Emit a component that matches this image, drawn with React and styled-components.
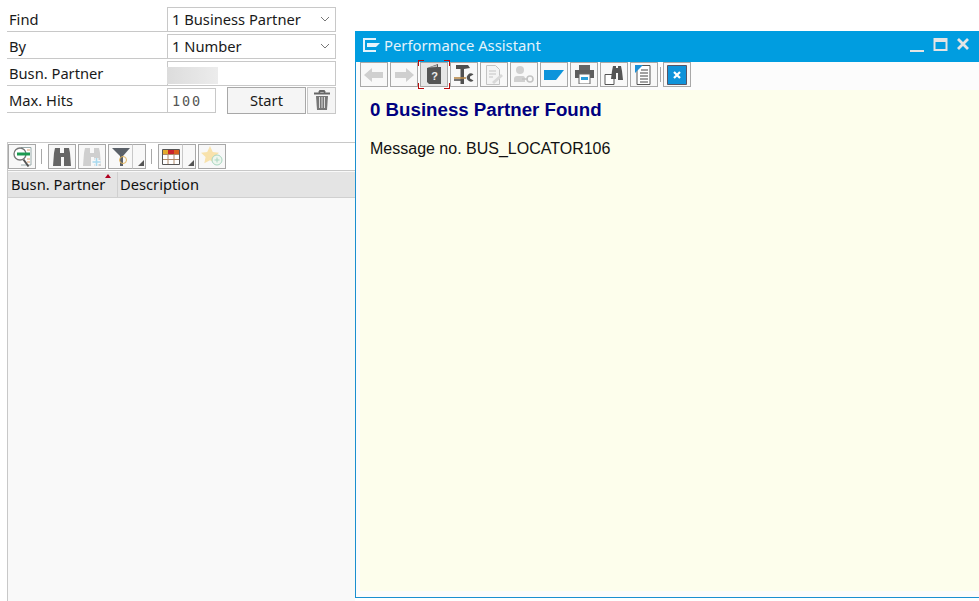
import React from "react";
import styled, { createGlobalStyle } from "styled-components";

const Global = createGlobalStyle`
  html, body { margin: 0; padding: 0; background: #fff; }
  * { box-sizing: border-box; }
`;
const Page = styled.div`
  position: relative; width: 979px; height: 601px; overflow: hidden; background: #fff;
  font-family: "Noto Sans", "Liberation Sans", sans-serif; color: #1a1a1a;
`;
const Left = styled.div`
  width: 348px; height: 601px; margin-left: 7px; padding-top: 7px; display: flex; flex-direction: column;
`;
const Form = styled.div`display: flex; flex-direction: column; gap: 2px; width: 329px;`;
const Row = styled.div`display: flex; height: 25px;`;
const Label = styled.div`
  width: 160px; padding: 2px 0 0 2px; font-size: 14.7px; line-height: 20px; border-bottom: 1px solid #c8c8c8;
`;
const Field = styled.div`
  width: ${p => p.$w || 169}px; border: 1px solid #c8c8c8; display: flex; align-items: center;
  justify-content: space-between; padding: 0 5px 2px 4px; font-size: 14.7px; background: #fff; overflow: visible;
`;
const MaxField = styled(Field)`padding-bottom: 0;`;
const Num = styled.span`
  font-family: "DejaVu Sans Mono", monospace; font-size: 13.5px; letter-spacing: 1.9px; color: #555;
`;
const Redacted = styled.div`
  width: 51px; height: 17px; margin: 6px 0 0 -5px;
  background: linear-gradient(90deg, #dcdcdc, #ececec);
`;
const StartBtn = styled.div`
  width: 79px; height: 27px; margin: -1px 0 0 11px; padding-bottom: 1px; border: 1px solid #a8a8a8; background: #f5f5f5;
  display: flex; align-items: center; justify-content: center; font-size: 14.7px;
`;
const TrashBtn = styled.div`
  width: 29px; height: 27px; margin: -1px 0 0 1px; border: 1px solid #c8c8c8; background: #f5f5f5;
  display: flex; align-items: center; justify-content: center;
`;
const Grid = styled.div`
  margin-top: 29px; flex: 1; display: flex; flex-direction: column; border-left: 1px solid #c8c8c8; background: #f9f9f9;
`;
const Tools = styled.div`
  height: 29px; padding: 1px 0 0 0; display: flex; align-items: flex-start; background: #fff;
  border-top: 1px solid #c8c8c8; border-bottom: 1px solid #c8c8c8;
`;
const Btn = styled.div`
  width: ${p => p.$w || 28}px; height: 25px; margin-left: ${p => p.$ml ?? 2}px; flex: none; position: relative;
  border: 1px solid #a8a8a8; background: ${p => p.$on ? "#e6e6e6" : "#f8f8f8"};
  display: flex; align-items: center; justify-content: center;
`;
const Caret = styled.div`
  width: 14px; height: 25px; flex: none; border: 1px solid #a8a8a8; border-left: 1px solid #c8c8c8; background: #f8f8f8; position: relative;
  margin-left: -1px;
  &::after { content: ""; position: absolute; right: 1px; bottom: 2px; border-style: solid; border-width: 0 0 6px 6px; border-color: transparent transparent #555 transparent; }
`;
const Sep = styled.div`width: 1px; height: 15px; margin: 5px ${p => p.$r ?? 6}px 0 ${p => p.$l ?? 5}px; background: #a8a8a8; flex: none;`;
const Head = styled.div`
  margin-top: 1px; height: 26px; background: #e4e4e4; border-bottom: 1px solid #d0d0d0; display: flex; font-size: 14.7px; color: #111;
`;
const HeadCell = styled.div`
  width: ${p => p.$w}px; padding: 2px 0 0 ${p => p.$pl ?? 3}px; line-height: 21px; position: relative; border-right: ${p => p.$line ? "1px solid #d0d0d0" : "0"}; white-space: nowrap;
`;
const Sort = styled.span`
  position: absolute; left: 97px; top: 2px; border-style: solid; border-width: 0 3px 4px 3px; border-color: transparent transparent #b00020 transparent;
`;
const Win = styled.div`
  position: absolute; left: 355px; top: 31px; width: 624px; height: 567px; background: #fcfcfc; display: flex; flex-direction: column;
  border-left: 1px solid #1b8fd0; border-bottom: 1px solid #1b8fd0;
`;
const Title = styled.div`
  height: 31px; flex: none; background: #009de0; color: #e4f3fb; display: flex; align-items: center; padding: 0 9px 3px 8px; font-size: 14.8px; margin-left: -1px;
`;
const TitleText = styled.span`margin-left: 4px; flex: 1;`;
const WinTools = styled.div`height: 28px; flex: none; display: flex; align-items: flex-start; padding-left: 2px; background: #fcfcfc;`;
const Corner = styled.span`
  position: absolute; width: 6px; height: 6px; border: 0 solid #b80c0c;
  ${p => p.$t ? "top: -3px; border-top-width: 1px;" : "bottom: -3px; border-bottom-width: 1px;"}
  ${p => p.$l ? "left: -3px; border-left-width: 1px;" : "right: -3px; border-right-width: 1px;"}
`;
const Content = styled.div`
  flex: 1; margin: 0 0 6px 4px; background: #fdfeec; padding: 8px 0 0 10px; font-family: "Liberation Sans", Arial, sans-serif;
`;
const H1 = styled.h1`margin: 0; font-size: 18.7px; line-height: 24px; font-weight: 700; color: #00007f;`;
const Msg = styled.p`margin: 17px 0 0; font-size: 16px; line-height: 20px; color: #111;`;

const Chevron = () => (
  <svg width="10" height="6" viewBox="0 0 10 6"><path d="M1 1l4 4 4-4" fill="none" stroke="#777" /></svg>
);
const Trash = () => (
  <svg width="18" height="21" viewBox="0 0 18 21">
    <path d="M6 2.500L7 1h4l1 1.500M1 3.500h16" fill="none" stroke="#666" strokeWidth="1.800" />
    <path d="M3 6h12l-1 14H4z" fill="#777" />
    <path d="M6.500 7v11M9 7v11M11.500 7v11" stroke="#ddd" />
  </svg>
);
const Binoc = ({ c = "#666", plus }) => (
  <svg width="20" height="20" viewBox="0 0 20 20">
    <path d="M3 1h5v5h4V1h5l1 5 1 13h-7v-9H9v9H1L2 6z" fill={c} />
    {plus && <path d="M14.500 11v8M10.500 15h8" stroke="#f8f8f8" strokeWidth="4" />}
    {plus && <path d="M14.500 11v8M10.500 15h8" stroke="#a9d9ee" strokeWidth="1.600" />}
  </svg>
);
const Find = () => (
  <svg width="21" height="22" viewBox="0 0 21 22">
    <path d="M9 1.500h10V19H9" fill="#fff" stroke="#9aa" />
    <path d="M15 4h3M15 13h3M15 16h3" stroke="#e0a070" />
    <circle cx="8" cy="8" r="6" fill="#fff" stroke="#777" strokeWidth="1.300" />
    <path d="M5 6.500h13v3H5z" fill="#1c9a50" />
    <path d="M11.500 13.500l5 7" stroke="#555" strokeWidth="2" />
  </svg>
);
const Filter = () => (
  <svg width="20" height="20" viewBox="0 0 20 20">
    <path d="M1 1h18l-7 8v10H9V9z" fill="#5a6068" />
    <circle cx="12" cy="13" r="3.500" fill="none" stroke="#e3b55c" />
  </svg>
);
const Table = () => (
  <svg width="18" height="16" viewBox="0 0 18 16">
    <path d="M.5.5h17v15H.5z" fill="#fff" stroke="#555" />
    <path d="M1 1h5v4H1z" fill="#e3a92c" /><path d="M6 1h6v4H6z" fill="#c8232c" /><path d="M12 1h5v4h-5z" fill="#d9601a" />
    <path d="M1 5.500h16M1 10.500h16M6 5v10M12 5v10" stroke="#b08a6a" />
  </svg>
);
const Star = () => (
  <svg width="23" height="21" viewBox="0 0 23 21">
    <path d="M9 0l2.800 6 6.200.7-4.600 4.300 1.300 6.300L9 14.200 3.300 17.300 4.600 11 0 6.700 6.200 6z" fill="#f8e2ac" />
    <circle cx="16" cy="14" r="5" fill="#eef6ee" stroke="#a8d6c0" />
    <path d="M16 11.500v5M13.500 14h5" stroke="#a8d6c0" />
  </svg>
);
const Arrow = ({ flip }) => (
  <svg width="20" height="14" viewBox="0 0 20 14" style={flip ? { transform: "scaleX(-1)" } : undefined}>
    <path d="M0 7l8-7v4h11v6H8v4z" fill="#cfcfcf" />
  </svg>
);
const Book = () => (
  <svg width="16" height="21" viewBox="0 0 16 21">
    <path d="M1 4l11-4v3h3v17H3l-2-2z" fill="#555" />
    <path d="M2.500 3.500L11 1v2z" fill="#bbb" />
    <text x="8.500" y="15.500" fontSize="11" fontWeight="700" fill="#eee" textAnchor="middle" fontFamily="Liberation Sans">?</text>
  </svg>
);
const Tools2 = () => (
  <svg width="20" height="21" viewBox="0 0 20 21">
    <path d="M2 1h12l2 3-6 1v15H6.500V5L2 5z" fill="#505050" />
    <path d="M0 14h12" stroke="#b98a4a" strokeWidth="1.600" />
    <path d="M0 16h10" stroke="#505050" strokeWidth="1.600" />
    <path d="M19.500 10.500a4 4 0 1 0 0 6l-3.500-2v-2z" fill="#505050" />
  </svg>
);
const DocPen = () => (
  <svg width="19" height="20" viewBox="0 0 19 20">
    <path d="M1.500.5h9l4 4v15h-13z" fill="#f4f4f4" stroke="#c4c4c4" />
    <path d="M4 6h7M4 9h7M4 12h4" stroke="#c4c4c4" />
    <path d="M7 17l9-8 2 2-9 8z" fill="#d8d8d8" />
  </svg>
);
const UserKey = () => (
  <svg width="22" height="18" viewBox="0 0 22 18">
    <circle cx="7" cy="4" r="4" fill="#d0d0d0" />
    <path d="M1 16v-3q0-3 3-3h6q2 0 2 3v3z" fill="#d0d0d0" />
    <circle cx="17" cy="13" r="3" fill="none" stroke="#c4c4c4" strokeWidth="1.600" />
    <path d="M9 13h6" stroke="#c4c4c4" strokeWidth="1.600" />
  </svg>
);
const Tag = () => (
  <svg width="20" height="10" viewBox="0 0 20 10"><path d="M0 0h20l-8 10H0z" fill="#0d94db" /></svg>
);
const Printer = () => (
  <svg width="19" height="19" viewBox="0 0 19 19">
    <path d="M4 0h11v5H4z" fill="#666" /><path d="M0 5h19v8H0z" fill="#5e5e5e" />
    <path d="M4 9h11v10H4z" fill="#fff" stroke="#666" />
    <path d="M6 12h7v3H6z" fill="#2a9fdc" />
  </svg>
);
const ShareFind = () => (
  <svg width="20" height="20" viewBox="0 0 20 20">
    <path d="M1 9.500h9v10H1z" fill="#fff" stroke="#555" />
    <path d="M9 1h3v2h2V1h3l1 5 1 9h-5V8h-2v6H7l1-8z" fill="#555" />
  </svg>
);
const Doc = () => (
  <svg width="18" height="20" viewBox="0 0 18 20">
    <path d="M2 .5h13v19H2z" fill="#fff" stroke="#555" />
    <path d="M0 0h8L0 8z" fill="#1c8fd6" />
    <path d="M6 5h7M5 8h8M5 11h8M5 14h8M5 17h8" stroke="#444" />
  </svg>
);
const CloseBox = () => (
  <svg width="20" height="20" viewBox="0 0 20 20">
    <path d="M.5.5h19v19H.5z" fill="#0f93da" stroke="#556" />
    <path d="M7 7l6 6M13 7l-6 6" stroke="#fff" strokeWidth="2.200" />
  </svg>
);
const WinIcon = () => (
  <svg width="17" height="14" viewBox="0 0 17 14">
    <path d="M0 0h13v2H2v10h11v2H0z" fill="#e4f3fb" />
    <path d="M4 5h13l-4 4H4z" fill="#e4f3fb" />
  </svg>
);
const WinCtrls = () => (
  <svg width="60" height="14" viewBox="0 0 60 14">
    <path d="M0 12h14v2H0z" fill="#e4e4e4" />
    <path d="M24.500 1h12v11h-12z" fill="none" stroke="#e4e4e4" strokeWidth="2" />
    <path d="M24 1h13v3H24z" fill="#e4e4e4" />
    <path d="M48 1l10 10M58 1L48 11" stroke="#e4e4e4" strokeWidth="2.800" />
  </svg>
);

export default function App() {
  return (
    <Page>
      <Global />
      <Left>
        <Form>
          <Row><Label>Find</Label><Field>1 Business Partner<Chevron /></Field></Row>
          <Row><Label>By</Label><Field>1 Number<Chevron /></Field></Row>
          <Row><Label>Busn. Partner</Label><Field><Redacted /></Field></Row>
          <Row>
            <Label>Max. Hits</Label>
            <MaxField $w={49}><Num>100</Num></MaxField>
            <StartBtn>Start</StartBtn>
            <TrashBtn><Trash /></TrashBtn>
          </Row>
        </Form>
        <Grid>
          <Tools>
            <Btn $ml={0}><Find /></Btn>
            <Sep />
            <Btn $ml={0}><Binoc /></Btn>
            <Btn><Binoc c="#cfcfcf" plus /></Btn>
            <Btn $w={25}><Filter /></Btn>
            <Caret />
            <Sep />
            <Btn $ml={0} $w={25}><Table /></Btn>
            <Caret />
            <Btn><Star /></Btn>
          </Tools>
          <Head>
            <HeadCell $w={110} $line>Busn. Partner<Sort /></HeadCell>
            <HeadCell $w={200} $pl={2}>Description</HeadCell>
          </Head>
        </Grid>
      </Left>
      <Win>
        <Title>
          <WinIcon />
          <TitleText>Performance Assistant</TitleText>
          <WinCtrls />
        </Title>
        <WinTools>
          <Btn $ml={2}><Arrow /></Btn>
          <Btn><Arrow flip /></Btn>
          <Btn $on>
            <Corner $t $l /><Corner $t /><Corner $l /><Corner />
            <Book />
          </Btn>
          <Btn><Tools2 /></Btn>
          <Btn><DocPen /></Btn>
          <Btn><UserKey /></Btn>
          <Btn><Tag /></Btn>
          <Btn><Printer /></Btn>
          <Btn><ShareFind /></Btn>
          <Btn><Doc /></Btn>
          <Sep $l={2} $r={2} />
          <Btn $ml={0}><CloseBox /></Btn>
        </WinTools>
        <Content>
          <H1>0 Business Partner Found</H1>
          <Msg>Message no. BUS_LOCATOR106</Msg>
        </Content>
      </Win>
    </Page>
  );
}
